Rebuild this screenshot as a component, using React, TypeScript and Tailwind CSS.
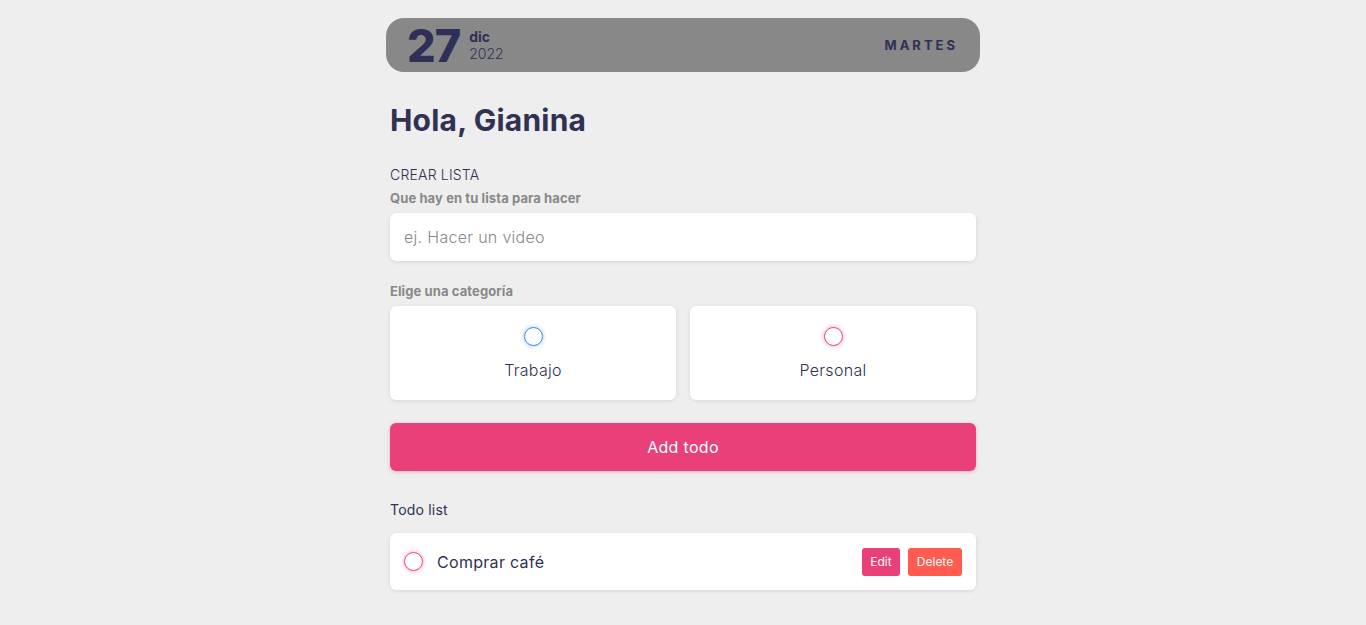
import { useState } from 'react'

type Category = 'trabajo' | 'personal'

interface Todo {
  id: number
  content: string
  category: Category
  done: boolean
}

const font = { fontFamily: 'Inter, "Noto Sans", sans-serif' }

export default function App() {
  const [todos] = useState<Todo[]>([
    { id: 1, content: 'Comprar café', category: 'personal', done: false }
  ])
  const [category, setCategory] = useState<Category | null>(null)

  return (
    <main className="min-h-screen bg-[#eeeeee] text-[#313154]" style={font}>
      <div className="mx-auto w-[594px] pt-[18px]">
        <header className="flex h-[54px] items-center justify-between rounded-[18px] bg-[#888888] pl-[21px] pr-[22px]">
          <div className="flex items-center gap-[9px]">
            <span className="text-[45px] font-extrabold leading-none tracking-[-1px] text-[#2f2f57]">27</span>
            <div className="flex flex-col leading-[17px]">
              <span className="text-[14px] font-bold text-[#2f2f57]">dic</span>
              <span className="text-[14px] font-light text-[#2f2f57]">2022</span>
            </div>
          </div>
          <span className="mt-[2px] text-[13px] font-bold tracking-[3px] text-[#2f2f57]">MARTES</span>
        </header>

        <div className="px-[4px]">
          <h1 className="mt-[30px] text-[30px] font-bold leading-[36px] tracking-[0.2px] text-[#313154]">Hola, Gianina</h1>

          <section className="mt-[28px]">
            <h3 className="text-[14px] font-light leading-[18px] tracking-[0.2px] text-[#313154]">CREAR LISTA</h3>
            <h4 className="mt-[6px] text-[13px] font-bold leading-[16px] tracking-[0.1px] text-[#888888]">Que hay en tu lista para hacer</h4>
            <input
              type="text"
              placeholder="ej. Hacer un video"
              className="mt-[7px] block h-[48px] w-full rounded-[6px] bg-white px-[14px] text-[16px] font-light tracking-[0.3px] text-[#313154] shadow-[0_1px_4px_rgba(0,0,0,0.1)] outline-none placeholder:text-[#888888]"
            />

            <h4 className="mt-[22px] text-[13px] font-bold leading-[16px] tracking-[0.1px] text-[#888888]">Elige una categoría</h4>
            <div className="mt-[7px] grid grid-cols-2 gap-[14px]">
              {(['trabajo', 'personal'] as Category[]).map((c) => (
                <label
                  key={c}
                  onClick={() => setCategory(c)}
                  className="flex h-[94px] cursor-pointer flex-col items-center justify-center rounded-[6px] bg-white shadow-[0_1px_4px_rgba(0,0,0,0.1)]"
                >
                  <span
                    className={`block h-[19px] w-[19px] rounded-full border-[1.5px] ${
                      c === 'trabajo'
                        ? 'border-[#3a82ee] shadow-[0_0_4px_rgba(58,130,238,0.5)]'
                        : 'border-[#ea407a] shadow-[0_0_4px_rgba(234,64,122,0.5)]'
                    } ${category === c ? (c === 'trabajo' ? 'bg-[#3a82ee]' : 'bg-[#ea407a]') : ''}`}
                  />
                  <span className="mt-[14px] text-[16px] font-light leading-[20px] tracking-[0.3px] text-[#313154]">
                    {c === 'trabajo' ? 'Trabajo' : 'Personal'}
                  </span>
                </label>
              ))}
            </div>

            <button className="mt-[23px] block h-[48px] w-full rounded-[6px] bg-[#ea407a] text-[16px] font-normal tracking-[0.3px] text-white shadow-[0_1px_4px_rgba(234,64,122,0.3)]">
              Add todo
            </button>
          </section>

          <section className="mt-[30px]">
            <h3 className="text-[14px] font-normal leading-[18px] tracking-[0.2px] text-[#313154]">Todo list</h3>
            <div className="mt-[14px] flex flex-col gap-[12px]">
              {todos.map((todo) => (
                <div
                  key={todo.id}
                  className="flex h-[57px] items-center rounded-[6px] bg-white pl-[14px] pr-[14px] shadow-[0_1px_4px_rgba(0,0,0,0.1)]"
                >
                  <span className="block h-[19px] w-[19px] rounded-full border-[1.5px] border-[#ea407a] shadow-[0_0_4px_rgba(234,64,122,0.5)]" />
                  <span className="ml-[14px] flex-1 text-[16px] font-normal tracking-[0.3px] text-[#313154]">{todo.content}</span>
                  <div className="flex gap-[8px]">
                    <button className="h-[28px] w-[38px] rounded-[3px] bg-[#ea407a] text-[12px] text-white">Edit</button>
                    <button className="h-[28px] w-[54px] rounded-[3px] bg-[#ff5b4f] text-[12px] text-white">Delete</button>
                  </div>
                </div>
              ))}
            </div>
          </section>
        </div>
      </div>
    </main>
  )
}
